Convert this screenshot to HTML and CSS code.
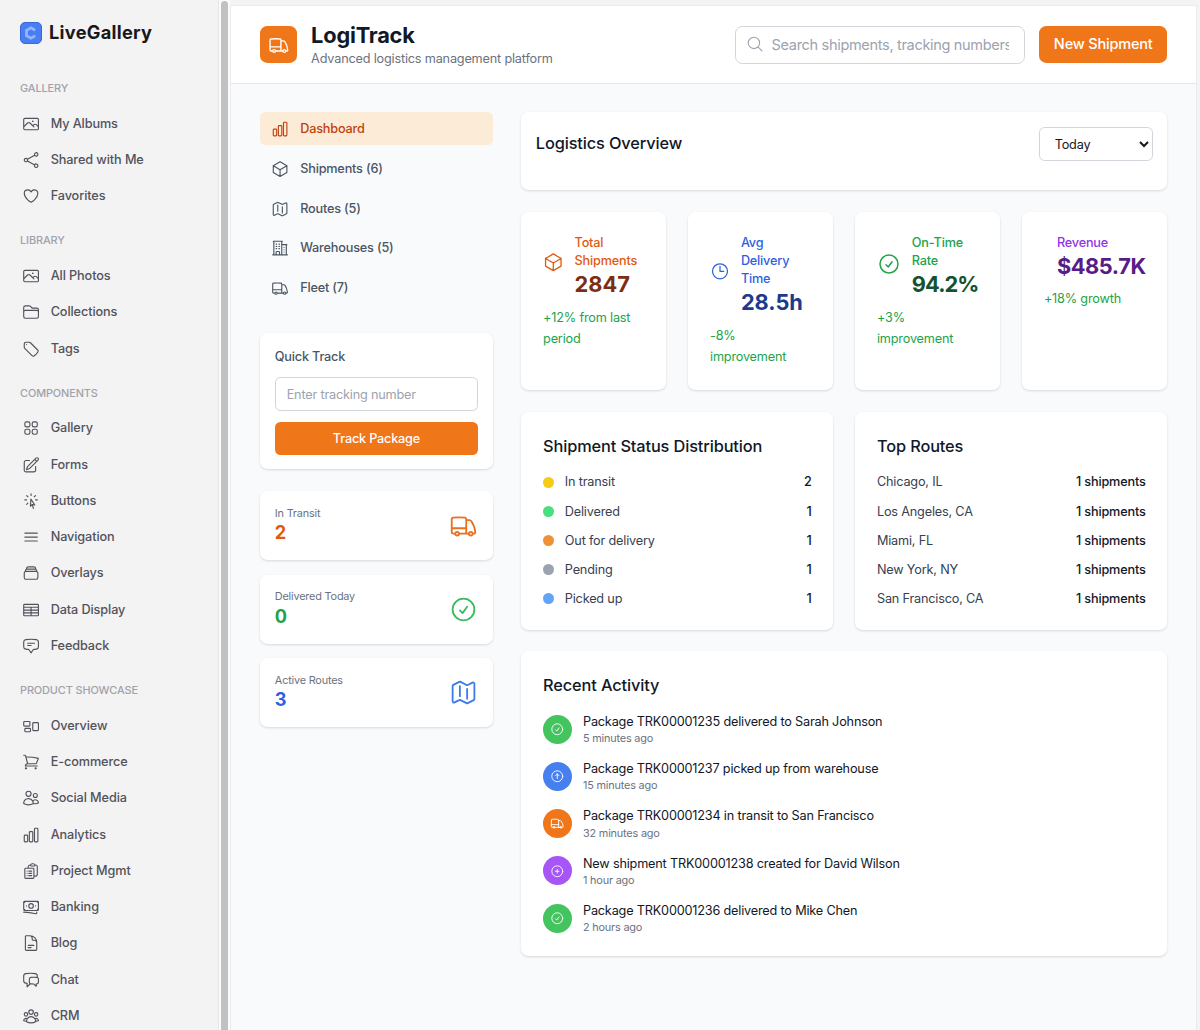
FILE: index.html
```html
<!DOCTYPE html>
<html lang="en">
<head>
    <meta charset="UTF-8">
    <meta name="viewport" content="width=device-width, initial-scale=1.0">
    <title>LogiTrack</title>
    <link rel="stylesheet" href="styles.css">
</head>
<body>
    <!-- icon set -->
    <svg class="sprite">
        <symbol id="photo" viewBox="0 0 24 24"><path d="m2.25 15.75 5.159-5.159a2.25 2.25 0 0 1 3.182 0l5.159 5.159m-1.5-1.5 1.409-1.409a2.25 2.25 0 0 1 3.182 0l2.909 2.909m-18 3.75h16.5a1.5 1.5 0 0 0 1.5-1.5V6a1.5 1.5 0 0 0-1.5-1.5H3.75A1.5 1.5 0 0 0 2.25 6v12a1.5 1.5 0 0 0 1.5 1.5Zm10.5-11.25h.008v.008h-.008V8.25Zm.375 0a.375.375 0 1 1-.75 0 .375.375 0 0 1 .75 0Z"/></symbol>
        <symbol id="share" viewBox="0 0 24 24"><path d="M7.217 10.907a2.25 2.25 0 1 0 0 2.186m0-2.186c.18.324.283.696.283 1.093s-.103.77-.283 1.093m0-2.186 9.566-5.314m-9.566 7.5 9.566 5.314m0 0a2.25 2.25 0 1 0 3.935 2.186 2.25 2.25 0 0 0-3.935-2.186Zm0-12.814a2.25 2.25 0 1 0 3.933-2.185 2.25 2.25 0 0 0-3.933 2.185Z"/></symbol>
        <symbol id="heart" viewBox="0 0 24 24"><path d="M21 8.25c0-2.485-2.099-4.5-4.688-4.5-1.935 0-3.597 1.126-4.312 2.733-.715-1.607-2.377-2.733-4.313-2.733C5.1 3.75 3 5.765 3 8.25c0 7.22 9 12 9 12s9-4.78 9-12Z"/></symbol>
        <symbol id="folder" viewBox="0 0 24 24"><path d="M2.25 12.75V12A2.25 2.25 0 0 1 4.5 9.75h15A2.25 2.25 0 0 1 21.75 12v.75m-8.69-6.44-2.12-2.12a1.5 1.5 0 0 0-1.061-.44H4.5A2.25 2.25 0 0 0 2.25 6v12a2.25 2.25 0 0 0 2.25 2.25h15A2.25 2.25 0 0 0 21.75 18V9a2.25 2.25 0 0 0-2.25-2.25h-5.379a1.5 1.5 0 0 1-1.06-.44Z"/></symbol>
        <symbol id="tag" viewBox="0 0 24 24"><path d="M9.568 3H5.25A2.25 2.25 0 0 0 3 5.25v4.318c0 .597.237 1.17.659 1.591l9.581 9.581c.699.699 1.78.872 2.607.33a18.095 18.095 0 0 0 5.223-5.223c.542-.827.369-1.908-.33-2.607L11.16 3.66A2.25 2.25 0 0 0 9.568 3Z"/><path d="M6 6h.008v.008H6V6Z"/></symbol>
        <symbol id="squares" viewBox="0 0 24 24"><path d="M3.75 6A2.25 2.25 0 0 1 6 3.75h2.25A2.25 2.25 0 0 1 10.5 6v2.25a2.25 2.25 0 0 1-2.25 2.25H6a2.25 2.25 0 0 1-2.25-2.25V6ZM3.75 15.75A2.25 2.25 0 0 1 6 13.5h2.25a2.25 2.25 0 0 1 2.25 2.25V18a2.25 2.25 0 0 1-2.25 2.25H6A2.25 2.25 0 0 1 3.75 18v-2.25ZM13.5 6a2.25 2.25 0 0 1 2.25-2.25H18A2.25 2.25 0 0 1 20.25 6v2.25A2.25 2.25 0 0 1 18 10.5h-2.25a2.25 2.25 0 0 1-2.25-2.25V6ZM13.5 15.75a2.25 2.25 0 0 1 2.25-2.25H18a2.25 2.25 0 0 1 2.25 2.25V18A2.25 2.25 0 0 1 18 20.25h-2.25A2.25 2.25 0 0 1 13.5 18v-2.25Z"/></symbol>
        <symbol id="pencil" viewBox="0 0 24 24"><path d="m16.862 4.487 1.687-1.688a1.875 1.875 0 1 1 2.652 2.652L10.582 16.07a4.5 4.5 0 0 1-1.897 1.13L6 18l.8-2.685a4.5 4.5 0 0 1 1.13-1.897l8.932-8.931Zm0 0L19.5 7.125M18 14v4.75A2.25 2.25 0 0 1 15.75 21H5.25A2.25 2.25 0 0 1 3 18.75V8.25A2.25 2.25 0 0 1 5.25 6H10"/></symbol>
        <symbol id="cursor" viewBox="0 0 24 24"><path d="M15.042 21.672 13.684 16.6m0 0-2.51 2.225.569-9.47 5.227 7.917-3.286-.672ZM12 2.25V4.5m5.834.166-1.591 1.591M20.25 10.5H18M7.757 14.743l-1.59 1.59M6 10.5H3.75m4.007-4.243-1.59-1.59"/></symbol>
        <symbol id="bars" viewBox="0 0 24 24"><path d="M3.75 6.75h16.5M3.75 12h16.5m-16.5 5.25h16.5"/></symbol>
        <symbol id="stack" viewBox="0 0 24 24"><path d="M6 6.878V6a2.25 2.25 0 0 1 2.25-2.25h7.5A2.25 2.25 0 0 1 18 6v.878m-12 0c.235-.083.487-.128.75-.128h10.5c.263 0 .515.045.75.128m-12 0A2.25 2.25 0 0 0 4.5 9v.878m13.5-3A2.25 2.25 0 0 1 19.5 9v.878m0 0a2.246 2.246 0 0 0-.75-.128H5.25c-.263 0-.515.045-.75.128m15 0A2.25 2.25 0 0 1 21 12v6a2.25 2.25 0 0 1-2.25 2.25H5.25A2.25 2.25 0 0 1 3 18v-6c0-.98.626-1.813 1.5-2.122"/></symbol>
        <symbol id="table" viewBox="0 0 24 24"><path d="M3.375 19.5h17.25m-17.25 0a1.125 1.125 0 0 1-1.125-1.125M3.375 19.5h7.5c.621 0 1.125-.504 1.125-1.125m-9.75 0V5.625m0 12.75v-1.5c0-.621.504-1.125 1.125-1.125m18.375 2.625V5.625m0 12.75c0 .621-.504 1.125-1.125 1.125m1.125-1.125v-1.5c0-.621-.504-1.125-1.125-1.125m0 3.75h-7.5A1.125 1.125 0 0 1 12 18.375m9.75-12.75c0-.621-.504-1.125-1.125-1.125H3.375c-.621 0-1.125.504-1.125 1.125m19.5 0v1.5c0 .621-.504 1.125-1.125 1.125M2.25 5.625v1.5c0 .621.504 1.125 1.125 1.125m0 0h17.25m-17.25 0h7.5c.621 0 1.125.504 1.125 1.125M3.375 8.25c-.621 0-1.125.504-1.125 1.125v1.5c0 .621.504 1.125 1.125 1.125m17.25-3.75h-7.5c-.621 0-1.125.504-1.125 1.125m8.625-1.125c.621 0 1.125.504 1.125 1.125v1.5c0 .621-.504 1.125-1.125 1.125m-17.25 0h7.5m-7.5 0c-.621 0-1.125.504-1.125 1.125v1.5c0 .621.504 1.125 1.125 1.125M12 10.875v-1.5m0 1.5c0 .621-.504 1.125-1.125 1.125M12 10.875c0 .621.504 1.125 1.125 1.125m-2.25 0c.621 0 1.125.504 1.125 1.125M13.125 12h7.5m-7.5 0c-.621 0-1.125.504-1.125 1.125M20.625 12c.621 0 1.125.504 1.125 1.125v1.5c0 .621-.504 1.125-1.125 1.125m-17.25 0h7.5M12 14.625v-1.5m0 1.5c0 .621-.504 1.125-1.125 1.125M12 14.625c0 .621.504 1.125 1.125 1.125m-2.25 0c.621 0 1.125.504 1.125 1.125m0 1.5v-1.5m0 0c0-.621.504-1.125 1.125-1.125m0 0h7.5"/></symbol>
        <symbol id="feedback" viewBox="0 0 24 24"><path d="M7.5 8.25h9m-9 3H12m-9.75 1.51c0 1.6 1.123 2.994 2.707 3.227 1.129.166 2.27.293 3.423.379.35.026.67.21.865.501L12 21l2.755-4.133a1.14 1.14 0 0 1 .865-.501 48.172 48.172 0 0 0 3.423-.379c1.584-.233 2.707-1.626 2.707-3.228V6.741c0-1.602-1.123-2.995-2.707-3.228A48.394 48.394 0 0 0 12 3c-2.392 0-4.744.175-7.043.513C3.373 3.746 2.25 5.14 2.25 6.741v6.018Z"/></symbol>
        <symbol id="group" viewBox="0 0 24 24"><path d="M2.25 7.125C2.25 6.504 2.754 6 3.375 6h6c.621 0 1.125.504 1.125 1.125v3.75c0 .621-.504 1.125-1.125 1.125h-6a1.125 1.125 0 0 1-1.125-1.125v-3.75ZM14.25 8.625c0-.621.504-1.125 1.125-1.125h5.25c.621 0 1.125.504 1.125 1.125v8.25c0 .621-.504 1.125-1.125 1.125h-5.25a1.125 1.125 0 0 1-1.125-1.125v-8.25ZM3.75 16.125c0-.621.504-1.125 1.125-1.125h5.25c.621 0 1.125.504 1.125 1.125v2.25c0 .621-.504 1.125-1.125 1.125h-5.25a1.125 1.125 0 0 1-1.125-1.125v-2.25Z"/></symbol>
        <symbol id="cart" viewBox="0 0 24 24"><path d="M2.25 3h1.386c.51 0 .955.343 1.087.835l.383 1.437M7.5 14.25a3 3 0 0 0-3 3h15.75m-12.75-3h11.218c1.121-2.3 2.1-4.684 2.924-7.138a60.114 60.114 0 0 0-16.536-1.84M7.5 14.25 5.106 5.272M6 20.25a.75.75 0 1 1-1.5 0 .75.75 0 0 1 1.5 0Zm12.75 0a.75.75 0 1 1-1.5 0 .75.75 0 0 1 1.5 0Z"/></symbol>
        <symbol id="users" viewBox="0 0 24 24"><path d="M15 19.128a9.38 9.38 0 0 0 2.625.372 9.337 9.337 0 0 0 4.121-.952 4.125 4.125 0 0 0-7.533-2.493M15 19.128v-.003c0-1.113-.285-2.16-.786-3.07M15 19.128v.106A12.318 12.318 0 0 1 8.624 21c-2.331 0-4.512-.645-6.374-1.766l-.001-.109a6.375 6.375 0 0 1 11.964-3.07M12 6.375a3.375 3.375 0 1 1-6.75 0 3.375 3.375 0 0 1 6.75 0Zm8.25 2.25a2.625 2.625 0 1 1-5.25 0 2.625 2.625 0 0 1 5.25 0Z"/></symbol>
        <symbol id="chart" viewBox="0 0 24 24"><path d="M3 13.125C3 12.504 3.504 12 4.125 12h2.25c.621 0 1.125.504 1.125 1.125v6.75C7.5 20.496 6.996 21 6.375 21h-2.25A1.125 1.125 0 0 1 3 19.875v-6.75ZM9.75 8.625c0-.621.504-1.125 1.125-1.125h2.25c.621 0 1.125.504 1.125 1.125v11.25c0 .621-.504 1.125-1.125 1.125h-2.25a1.125 1.125 0 0 1-1.125-1.125V8.625ZM16.5 4.125c0-.621.504-1.125 1.125-1.125h2.25C20.496 3 21 3.504 21 4.125v15.75c0 .621-.504 1.125-1.125 1.125h-2.25a1.125 1.125 0 0 1-1.125-1.125V4.125Z"/></symbol>
        <symbol id="clipboard" viewBox="0 0 24 24"><path d="M9 12h3.75M9 15h3.75M9 18h3.75m3 .75H18a2.25 2.25 0 0 0 2.25-2.25V6.108c0-1.135-.845-2.098-1.976-2.192a48.424 48.424 0 0 0-1.123-.08m-5.801 0c-.065.21-.1.433-.1.664 0 .414.336.75.75.75h4.5a.75.75 0 0 0 .75-.75 2.25 2.25 0 0 0-.1-.664m-5.8 0A2.251 2.251 0 0 1 13.5 2.25H15c1.012 0 1.867.668 2.15 1.586m-5.8 0c-.376.023-.75.05-1.124.08C9.095 4.01 8.25 4.973 8.25 6.108V8.25m0 0H4.875c-.621 0-1.125.504-1.125 1.125v11.25c0 .621.504 1.125 1.125 1.125h9.75c.621 0 1.125-.504 1.125-1.125V9.375c0-.621-.504-1.125-1.125-1.125H8.25ZM6.75 12h.008v.008H6.75V12Zm0 3h.008v.008H6.75V15Zm0 3h.008v.008H6.75V18Z"/></symbol>
        <symbol id="banknotes" viewBox="0 0 24 24"><path d="M2.25 18.75a60.07 60.07 0 0 1 15.797 2.101c.727.198 1.453-.342 1.453-1.096V18.75M3.75 4.5v.75A.75.75 0 0 1 3 6h-.75m0 0v-.375c0-.621.504-1.125 1.125-1.125H20.25M2.25 6v9m18-10.5v.75c0 .414.336.75.75.75h.75m-1.5-1.5h.375c.621 0 1.125.504 1.125 1.125v9.75c0 .621-.504 1.125-1.125 1.125h-.375m1.5-1.5H21a.75.75 0 0 0-.75.75v.75m0 0H3.75m0 0h-.375a1.125 1.125 0 0 1-1.125-1.125V15m1.5 1.5v-.75A.75.75 0 0 0 3 15h-.75M15 10.5a3 3 0 1 1-6 0 3 3 0 0 1 6 0Zm3 0h.008v.008H18V10.5Zm-12 0h.008v.008H6V10.5Z"/></symbol>
        <symbol id="document" viewBox="0 0 24 24"><path d="M19.5 14.25v-2.625a3.375 3.375 0 0 0-3.375-3.375h-1.5A1.125 1.125 0 0 1 13.5 7.125v-1.5a3.375 3.375 0 0 0-3.375-3.375H8.25m0 12.75h7.5m-7.5 3H12M10.5 2.25H5.625c-.621 0-1.125.504-1.125 1.125v17.25c0 .621.504 1.125 1.125 1.125h12.75c.621 0 1.125-.504 1.125-1.125V11.25a9 9 0 0 0-9-9Z"/></symbol>
        <symbol id="chat" viewBox="0 0 24 24"><path d="M20.25 8.511c.884.284 1.5 1.128 1.5 2.097v4.286c0 1.136-.847 2.1-1.98 2.193-.34.027-.68.052-1.02.072v3.091l-3-3c-1.354 0-2.694-.055-4.02-.163a2.115 2.115 0 0 1-.825-.242m9.345-8.334a2.126 2.126 0 0 0-.476-.095 48.64 48.64 0 0 0-8.048 0c-1.131.094-1.976 1.057-1.976 2.192v4.286c0 .837.46 1.58 1.155 1.951m9.345-8.334V6.637c0-1.621-1.152-3.026-2.76-3.235A48.455 48.455 0 0 0 11.25 3c-2.115 0-4.198.137-6.24.402-1.608.209-2.76 1.614-2.76 3.235v6.226c0 1.621 1.152 3.026 2.76 3.235.577.075 1.157.14 1.74.194V21l4.155-4.155"/></symbol>
        <symbol id="crm" viewBox="0 0 24 24"><path d="M18 18.72a9.094 9.094 0 0 0 3.741-.479 3 3 0 0 0-4.682-2.72m.94 3.198.001.031c0 .225-.012.447-.037.666A11.944 11.944 0 0 1 12 21c-2.17 0-4.207-.576-5.963-1.584A6.062 6.062 0 0 1 6 18.719m12 0a5.971 5.971 0 0 0-.941-3.197m0 0A5.995 5.995 0 0 0 12 12.75a5.995 5.995 0 0 0-5.058 2.772m0 0a3 3 0 0 0-4.681 2.72 8.986 8.986 0 0 0 3.74.477m.94-3.197a5.971 5.971 0 0 0-.94 3.197M15 6.75a3 3 0 1 1-6 0 3 3 0 0 1 6 0Zm6 3a2.25 2.25 0 1 1-4.5 0 2.25 2.25 0 0 1 4.5 0Zm-13.5 0a2.25 2.25 0 1 1-4.5 0 2.25 2.25 0 0 1 4.5 0Z"/></symbol>
        <symbol id="truck" viewBox="0 0 24 24"><path d="M8.25 18.75a1.5 1.5 0 0 1-3 0m3 0a1.5 1.5 0 0 0-3 0m3 0h6m-9 0H3.375a1.125 1.125 0 0 1-1.125-1.125V14.25m17.25 4.5a1.5 1.5 0 0 1-3 0m3 0a1.5 1.5 0 0 0-3 0m3 0h1.125c.621 0 1.129-.504 1.09-1.124a17.902 17.902 0 0 0-3.213-9.193 2.056 2.056 0 0 0-1.58-.86H14.25M16.5 18.75h-2.25m0-11.177v-.958c0-.568-.422-1.048-.987-1.106a48.554 48.554 0 0 0-10.026 0 1.106 1.106 0 0 0-.987 1.106v7.635m12-6.677v6.677m0 4.5v-4.5m0 0h-12"/></symbol>
        <symbol id="cube" viewBox="0 0 24 24"><path d="m21 7.5-9-5.25L3 7.5m18 0-9 5.25m9-5.25v9l-9 5.25M3 7.5l9 5.25M3 7.5v9l9 5.25m0-9v9"/></symbol>
        <symbol id="map" viewBox="0 0 24 24"><path d="M9 6.75V15m6-6v8.25m.503 3.498 4.875-2.437c.381-.19.622-.58.622-1.006V4.82c0-.836-.88-1.38-1.628-1.006l-3.869 1.934c-.317.159-.69.159-1.006 0L9.503 3.252a1.125 1.125 0 0 0-1.006 0L3.622 5.689C3.24 5.88 3 6.27 3 6.695V19.18c0 .836.88 1.38 1.628 1.006l3.869-1.934c.317-.159.69-.159 1.006 0l4.994 2.497c.317.158.69.158 1.006 0Z"/></symbol>
        <symbol id="building" viewBox="0 0 24 24"><path d="M2.25 21h19.5m-18-18v18m10.5-18v18m6-13.5V21M6.75 6.75h.75m-.75 3h.75m-.75 3h.75m3-6h.75m-.75 3h.75m-.75 3h.75M6.75 21v-3.375c0-.621.504-1.125 1.125-1.125h2.25c.621 0 1.125.504 1.125 1.125V21M3 3h12m-.75 4.5H21m-3.75 3.75h.008v.008h-.008v-.008Zm0 3h.008v.008h-.008v-.008Zm0 3h.008v.008h-.008v-.008Z"/></symbol>
        <symbol id="clock" viewBox="0 0 24 24"><path d="M12 6v6h4.5m4.5 0a9 9 0 1 1-18 0 9 9 0 0 1 18 0Z"/></symbol>
        <symbol id="check" viewBox="0 0 24 24"><path d="M9 12.75 11.25 15 15 9.75M21 12a9 9 0 1 1-18 0 9 9 0 0 1 18 0Z"/></symbol>
        <symbol id="up" viewBox="0 0 24 24"><path d="m15 11.25-3-3m0 0-3 3m3-3v7.5M21 12a9 9 0 1 1-18 0 9 9 0 0 1 18 0Z"/></symbol>
        <symbol id="plus" viewBox="0 0 24 24"><path d="M12 9v6m3-3H9m12 0a9 9 0 1 1-18 0 9 9 0 0 1 18 0Z"/></symbol>
        <symbol id="search" viewBox="0 0 24 24"><path d="m21 21-5.197-5.197m0 0A7.5 7.5 0 1 0 5.196 5.196a7.5 7.5 0 0 0 10.607 10.607Z"/></symbol>
    </svg>

    <div class="layout">
        <aside class="sidebar">
            <div class="brand">
                <svg class="brand-logo" viewBox="0 0 22 22">
                    <rect x=".5" y=".5" width="21" height="21" rx="4.5" fill="#4a7df3" stroke="#3768dc"/>
                    <path d="M15.2 8.2 11 5.8 6.5 8.4v5.2l4.5 2.6 4.2-2.4" fill="none" stroke="#8db8fd" stroke-width="2.8"/>
                </svg>
                <span>LiveGallery</span>
            </div>

            <h4>Gallery</h4>
            <a><svg class="icon"><use href="#photo"/></svg>My Albums</a>
            <a><svg class="icon"><use href="#share"/></svg>Shared with Me</a>
            <a><svg class="icon"><use href="#heart"/></svg>Favorites</a>

            <h4>Library</h4>
            <a><svg class="icon"><use href="#photo"/></svg>All Photos</a>
            <a><svg class="icon"><use href="#folder"/></svg>Collections</a>
            <a><svg class="icon"><use href="#tag"/></svg>Tags</a>

            <h4>Components</h4>
            <a><svg class="icon"><use href="#squares"/></svg>Gallery</a>
            <a><svg class="icon"><use href="#pencil"/></svg>Forms</a>
            <a><svg class="icon"><use href="#cursor"/></svg>Buttons</a>
            <a><svg class="icon"><use href="#bars"/></svg>Navigation</a>
            <a><svg class="icon"><use href="#stack"/></svg>Overlays</a>
            <a><svg class="icon"><use href="#table"/></svg>Data Display</a>
            <a><svg class="icon"><use href="#feedback"/></svg>Feedback</a>

            <h4>Product Showcase</h4>
            <a><svg class="icon"><use href="#group"/></svg>Overview</a>
            <a><svg class="icon"><use href="#cart"/></svg>E-commerce</a>
            <a><svg class="icon"><use href="#users"/></svg>Social Media</a>
            <a><svg class="icon"><use href="#chart"/></svg>Analytics</a>
            <a><svg class="icon"><use href="#clipboard"/></svg>Project Mgmt</a>
            <a><svg class="icon"><use href="#banknotes"/></svg>Banking</a>
            <a><svg class="icon"><use href="#document"/></svg>Blog</a>
            <a><svg class="icon"><use href="#chat"/></svg>Chat</a>
            <a><svg class="icon"><use href="#crm"/></svg>CRM</a>
        </aside>
        <div class="scrollbar"><div class="thumb"></div></div>

        <div class="app">
            <header>
                <div class="app-logo"><svg class="icon"><use href="#truck"/></svg></div>
                <div class="app-title">
                    <h1>LogiTrack</h1>
                    <p>Advanced logistics management platform</p>
                </div>
                <label class="search">
                    <svg class="icon"><use href="#search"/></svg>
                    <input type="text" placeholder="Search shipments, tracking numbers...">
                </label>
                <button class="btn-new">New Shipment</button>
            </header>

            <div class="main">
                <div class="left">
                    <nav>
                        <a class="active"><svg class="icon"><use href="#chart"/></svg>Dashboard</a>
                        <a><svg class="icon"><use href="#cube"/></svg>Shipments (6)</a>
                        <a><svg class="icon"><use href="#map"/></svg>Routes (5)</a>
                        <a><svg class="icon"><use href="#building"/></svg>Warehouses (5)</a>
                        <a><svg class="icon"><use href="#truck"/></svg>Fleet (7)</a>
                    </nav>

                    <div class="card quick">
                        <h3>Quick Track</h3>
                        <input type="text" placeholder="Enter tracking number">
                        <button>Track Package</button>
                    </div>

                    <div class="stats">
                        <div class="card stat orange">
                            <div><p>In Transit</p><strong>2</strong></div>
                            <svg class="icon"><use href="#truck"/></svg>
                        </div>
                        <div class="card stat green">
                            <div><p>Delivered Today</p><strong>0</strong></div>
                            <svg class="icon"><use href="#check"/></svg>
                        </div>
                        <div class="card stat blue">
                            <div><p>Active Routes</p><strong>3</strong></div>
                            <svg class="icon"><use href="#map"/></svg>
                        </div>
                    </div>
                </div>

                <div class="content">
                    <div class="card overview">
                        <h2>Logistics Overview</h2>
                        <select>
                            <option>Today</option>
                            <option>This Week</option>
                            <option>This Month</option>
                        </select>
                    </div>

                    <div class="metrics">
                        <div class="card metric shipments">
                            <div class="metric-top">
                                <svg class="icon"><use href="#cube"/></svg>
                                <div><p>Total Shipments</p><strong>2847</strong></div>
                            </div>
                            <p class="change">+12% from last period</p>
                        </div>
                        <div class="card metric delivery">
                            <div class="metric-top">
                                <svg class="icon"><use href="#clock"/></svg>
                                <div><p>Avg Delivery Time</p><strong>28.5h</strong></div>
                            </div>
                            <p class="change">-8% improvement</p>
                        </div>
                        <div class="card metric ontime">
                            <div class="metric-top">
                                <svg class="icon"><use href="#check"/></svg>
                                <div><p>On-Time Rate</p><strong>94.2%</strong></div>
                            </div>
                            <p class="change">+3% improvement</p>
                        </div>
                        <div class="card metric revenue">
                            <div class="metric-top">
                                <div><p>Revenue</p><strong>$485.7K</strong></div>
                            </div>
                            <p class="change">+18% growth</p>
                        </div>
                    </div>

                    <div class="lists">
                        <div class="card list">
                            <h2>Shipment Status Distribution</h2>
                            <ul>
                                <li><i class="dot yellow"></i><span>In transit</span><b>2</b></li>
                                <li><i class="dot lime"></i><span>Delivered</span><b>1</b></li>
                                <li><i class="dot amber"></i><span>Out for delivery</span><b>1</b></li>
                                <li><i class="dot gray"></i><span>Pending</span><b>1</b></li>
                                <li><i class="dot sky"></i><span>Picked up</span><b>1</b></li>
                            </ul>
                        </div>
                        <div class="card list">
                            <h2>Top Routes</h2>
                            <ul>
                                <li><span>Chicago, IL</span><b>1 shipments</b></li>
                                <li><span>Los Angeles, CA</span><b>1 shipments</b></li>
                                <li><span>Miami, FL</span><b>1 shipments</b></li>
                                <li><span>New York, NY</span><b>1 shipments</b></li>
                                <li><span>San Francisco, CA</span><b>1 shipments</b></li>
                            </ul>
                        </div>
                    </div>

                    <div class="card activity">
                        <h2>Recent Activity</h2>
                        <ul>
                            <li>
                                <div class="badge bg-green"><svg class="icon"><use href="#check"/></svg></div>
                                <div><p>Package TRK00001235 delivered to Sarah Johnson</p><small>5 minutes ago</small></div>
                            </li>
                            <li>
                                <div class="badge bg-blue"><svg class="icon"><use href="#up"/></svg></div>
                                <div><p>Package TRK00001237 picked up from warehouse</p><small>15 minutes ago</small></div>
                            </li>
                            <li>
                                <div class="badge bg-orange"><svg class="icon"><use href="#truck"/></svg></div>
                                <div><p>Package TRK00001234 in transit to San Francisco</p><small>32 minutes ago</small></div>
                            </li>
                            <li>
                                <div class="badge bg-purple"><svg class="icon"><use href="#plus"/></svg></div>
                                <div><p>New shipment TRK00001238 created for David Wilson</p><small>1 hour ago</small></div>
                            </li>
                            <li>
                                <div class="badge bg-green"><svg class="icon"><use href="#check"/></svg></div>
                                <div><p>Package TRK00001236 delivered to Mike Chen</p><small>2 hours ago</small></div>
                            </li>
                        </ul>
                    </div>
                </div>
            </div>
        </div>
    </div>
</body>
</html>
```
FILE: styles.css
```css
* {
    box-sizing: border-box;
    margin: 0;
    padding: 0;
}
html {
    font-size: 14.52px;
}
body {
    font-family: Inter, "Liberation Sans", sans-serif;
    font-size: 0.875rem;
    line-height: 1.25rem;
    letter-spacing: -0.19px;
    background-color: #f4f4f5;
    color: #111827;
    overflow: hidden;
}
input, select, button {
    font-family: inherit;
    letter-spacing: inherit;
}
ul {
    list-style: none;
}
.sprite {
    display: none;
}
.icon {
    display: block;
    flex-shrink: 0;
    width: 1.25rem;
    height: 1.25rem;
    fill: none;
    stroke: currentColor;
    stroke-width: 1.5;
    stroke-linecap: round;
    stroke-linejoin: round;
}
.layout {
    display: flex;
    height: 1030px;
}

/* sidebar */
.sidebar {
    width: 219px;
    padding: 21.5px 20px 0;
    background-color: #f3f3f4;
    border-right: 1px solid #e6e6e8;
    letter-spacing: -0.1px;
    overflow: hidden;
}
.brand {
    display: flex;
    align-items: center;
    gap: 7px;
    height: 22px;
    margin-bottom: 35.5px;
    font-size: 18.2px;
    font-weight: 700;
    letter-spacing: 0.28px;
    color: #18181b;
}
.brand-logo {
    width: 22px;
    height: 22px;
}
.sidebar h4 {
    height: 18px;
    margin-bottom: 8.6px;
    font-size: 10.9px;
    font-weight: 500;
    line-height: 18px;
    text-transform: uppercase;
    color: #a1a1aa;
}
.sidebar a + h4 {
    margin-top: 16.8px;
}
.sidebar a {
    display: flex;
    align-items: center;
    gap: 10.5px;
    height: 36.3px;
    padding-left: 2px;
    font-weight: 500;
    color: #52525b;
}
.scrollbar {
    width: 11px;
    padding: 1px 2px 0 1.5px;
    background-color: #fbfbfb;
}
.thumb {
    height: 1040px;
    border-radius: 4px;
    background-color: #c1c1c1;
}

/* app panel */
.app {
    flex: 1;
    margin: 5px 3px 0 0;
    border: 1px solid #ebebed;
    border-bottom: none;
    background-color: #f9fafb;
}
header {
    display: flex;
    align-items: center;
    height: 78px;
    padding: 0 2rem 0 29.3px;
    background-color: #fff;
    border-bottom: 1px solid #e5e7eb;
}
.app-logo {
    display: flex;
    align-items: center;
    justify-content: center;
    width: 2.5rem;
    height: 2.5rem;
    margin-right: 1rem;
    border-radius: 0.5rem;
    background-color: #f0761a;
    color: #fff;
}
.app-logo .icon {
    width: 1.5rem;
    height: 1.5rem;
}
.app-title h1 {
    font-size: 1.5rem;
    line-height: 2rem;
    font-weight: 700;
}
.app-title p {
    padding-top: 0.5px;
    color: #6b7280;
}
.search {
    display: flex;
    align-items: center;
    gap: 7px;
    width: 20rem;
    height: 38px;
    margin-left: auto;
    padding: 0 1rem 0 0.75rem;
    border: 1px solid #d1d5db;
    border-radius: 0.5rem;
    color: #9ca3af;
}
.search input {
    flex: 1;
    width: 0;
    border: none;
    outline: none;
    font-size: 1rem;
    letter-spacing: -0.32px;
}
::placeholder {
    color: #9ca3af;
}
.btn-new {
    height: 2.5rem;
    width: 127.5px;
    margin-left: 1rem;
    border: none;
    border-radius: 0.5rem;
    background-color: #f0761a;
    color: #fff;
    font-size: 1rem;
    font-weight: 500;
}
.main {
    display: flex;
    gap: 28.7px;
    padding: 28.4px 28.7px 0 29.3px;
}
.card {
    background-color: #fff;
    border-radius: 0.5rem;
    box-shadow: 0 1px 3px rgba(0, 0, 0, 0.09), 0 1px 2px rgba(0, 0, 0, 0.05);
}

/* left column */
.left {
    width: 16rem;
    flex-shrink: 0;
}
nav {
    display: flex;
    flex-direction: column;
    gap: 0.5rem;
    margin-bottom: 2rem;
}
nav a {
    display: flex;
    align-items: center;
    gap: 0.75rem;
    height: 32.6px;
    padding: 0.5px 0.75rem 0;
    border-radius: 0.375rem;
    font-weight: 500;
    color: #4b5563;
}
nav .active {
    background-color: #fcecd7;
    color: #c2410c;
}
.quick {
    padding: 1rem;
    margin-bottom: 1.5rem;
}
.quick h3 {
    font-size: 0.875rem;
    font-weight: 500;
    color: #4b5563;
}
.quick input, .quick button {
    display: block;
    width: 100%;
    margin-top: 0.75rem;
    border-radius: 0.375rem;
    font-size: 0.875rem;
}
.quick input {
    height: 34.5px;
    padding: 0 0.75rem;
    border: 1px solid #d1d5db;
}
.quick button {
    height: 32.6px;
    border: none;
    background-color: #f0761a;
    color: #fff;
    font-weight: 500;
}
.stats {
    display: flex;
    flex-direction: column;
    gap: 1rem;
}
.stat {
    display: flex;
    align-items: center;
    justify-content: space-between;
    padding: 1rem;
}
.stat p {
    font-size: 0.75rem;
    line-height: 1rem;
    color: #6b7280;
}
.stat strong {
    display: block;
    font-size: 1.25rem;
    line-height: 1.75rem;
}
.stat .icon {
    width: 2rem;
    height: 2rem;
}
.orange {
    color: #e2590f;
}
.orange .icon {
    color: #e8701f;
}
.green {
    color: #22a34a;
}
.green .icon {
    color: #3cba62;
}
.blue {
    color: #2f5fdd;
}
.blue .icon {
    color: #3b7bea;
}

/* right column */
.content {
    flex: 1;
    display: flex;
    flex-direction: column;
    gap: 1.5rem;
}
h2 {
    font-size: 1.125rem;
    line-height: 1.75rem;
    font-weight: 500;
    letter-spacing: -0.12px;
}
.overview {
    display: flex;
    justify-content: space-between;
    align-items: center;
    padding: 1rem 1rem 2rem;
    height: 78px;
}
select {
    width: 114px;
    height: 34.5px;
    padding: 0 0.75rem;
    border: 1px solid #d1d5db;
    border-radius: 0.375rem;
    background-color: #fff;
    font-size: 0.875rem;
    color: #18181b;
}
.metrics {
    display: grid;
    grid-template-columns: repeat(4, minmax(0, 1fr));
    gap: 1.5rem;
}
.metric {
    padding: 1.5rem;
}
.metric-top {
    display: flex;
    align-items: center;
    gap: 0.75rem;
    margin-bottom: 0.5rem;
}
.metric-top strong {
    display: block;
    font-size: 1.5rem;
    line-height: 2rem;
    letter-spacing: 0;
}
.metric-top p {
    font-weight: 500;
}
.metric .change {
    line-height: 1.5rem;
    color: #22a34a;
}
.metric .icon {
    width: 20.6px;
    height: 20.6px;
    margin-bottom: 8px;
}
.shipments {
    color: #e2590f;
}
.shipments strong {
    color: #7c2d12;
}
.delivery {
    color: #2f5fdd;
}
.delivery strong {
    color: #1e3a8a;
}
.delivery .icon {
    width: 20px;
}
.ontime {
    color: #22a34a;
}
.ontime strong {
    color: #14532d;
    letter-spacing: -0.9px;
}
.ontime .icon {
    width: 24px;
    height: 24px;
    margin-bottom: 5px;
}
.revenue {
    color: #9333ea;
}
.revenue strong {
    color: #581c87;
    letter-spacing: -0.4px;
}
.revenue .metric-top {
    padding-left: 13px;
}
.lists {
    display: grid;
    grid-template-columns: 1fr 1fr;
    gap: 1.5rem;
}
.list, .activity {
    padding: 1.5rem;
}
.list ul, .activity ul {
    display: flex;
    flex-direction: column;
    gap: 0.75rem;
    margin-top: 1rem;
}
.list li {
    display: flex;
    align-items: center;
}
.list span {
    flex: 1;
    color: #374151;
}
.list b {
    font-weight: 500;
}
.dot {
    width: 0.75rem;
    height: 0.75rem;
    margin-right: 0.75rem;
    border-radius: 50%;
}
.yellow { background-color: #f5cb15; }
.lime { background-color: #4ade80; }
.amber { background-color: #ef9138; }
.gray { background-color: #9ca3af; }
.sky { background-color: #60a5fa; }

.activity ul {
    gap: 1rem;
}
.activity li {
    display: flex;
    align-items: center;
    gap: 0.75rem;
}
.activity small {
    display: block;
    font-size: 0.75rem;
    line-height: 1rem;
    color: #6b7280;
}
.badge {
    display: flex;
    align-items: center;
    justify-content: center;
    width: 2rem;
    height: 2rem;
    border-radius: 50%;
    color: #fff;
}
.badge .icon {
    width: 1rem;
    height: 1rem;
}
.bg-green { background-color: #44c45e; }
.bg-blue { background-color: #4680ee; }
.bg-orange { background-color: #f0761a; }
.bg-purple { background-color: #a855f7; }
```
